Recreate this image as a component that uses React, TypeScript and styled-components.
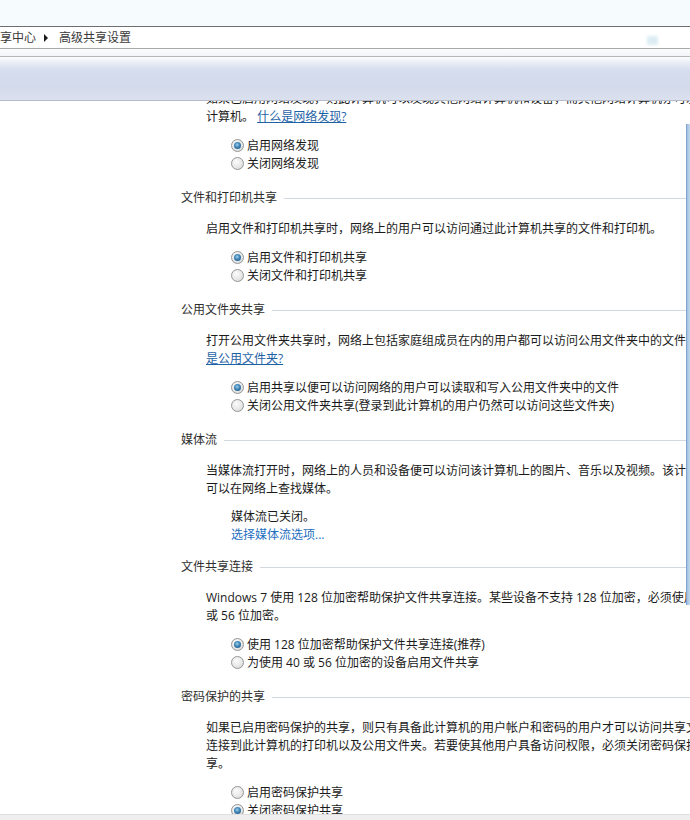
import React from 'react';
import styled, { createGlobalStyle } from 'styled-components';

const GlobalStyle = createGlobalStyle`
  html, body {
    margin: 0;
    padding: 0;
    background: #ffffff;
    overflow: hidden;
  }
  body {
    font-family: "Open Sans", "Noto Sans CJK SC", sans-serif;
    font-size: 12px;
    color: #1a1a1a;
  }
`;

const Window = styled.div`
  position: relative;
  width: 690px;
  height: 820px;
  display: flex;
  flex-direction: column;
  overflow: hidden;
  background: #fff;
`;

const TopStrip = styled.div`
  height: 26px;
  flex-shrink: 0;
  background: #f6fbfd;
`;

const Breadcrumb = styled.div`
  height: 21px;
  flex-shrink: 0;
  display: flex;
  align-items: center;
  border-top: 1px solid #6e6e6e;
  border-bottom: 1px solid #a9a9a9;
  background: #fff;
  line-height: 21px;
  white-space: nowrap;
`;

const Crumb = styled.span`
  color: #3a3a3a;
`;

const CrumbArrow = styled.span`
  width: 0;
  height: 0;
  margin: 0 11px 0 8px;
  border-left: 4px solid #1a1a1a;
  border-top: 4px solid transparent;
  border-bottom: 4px solid transparent;
`;

const SearchGlow = styled.span`
  margin-left: auto;
  margin-right: 32px;
  width: 11px;
  height: 9px;
  margin-top: 6px;
  border-radius: 2px;
  background: #dcecf4;
  filter: blur(1.5px);
`;

const Gap = styled.div`
  height: 7px;
  flex-shrink: 0;
  background: linear-gradient(#fbfcfd, #f1f4f8);
  border-bottom: 1px solid #b3b5b8;
`;

const CommandBand = styled.div`
  height: 43px;
  flex-shrink: 0;
  background: linear-gradient(#fbfcfe 0, #e6eaf4 7px, #d6ddee 13px, #d3daeb 70%, #dbe0ee 100%);
  border-bottom: 1px solid #b7bccb;
`;

const Scroller = styled.div`
  flex: 1;
  overflow: hidden;
`;

const Page = styled.div`
  margin-top: -11px;
  padding-left: 181px;
  width: 560px;
`;

const Section = styled.div<{ $gap?: number }>`
  margin-top: ${({ $gap }) => $gap ?? 17}px;
`;

const Heading = styled.div`
  display: flex;
  align-items: center;
  line-height: 18px;
  color: #2e2e2e;
  white-space: nowrap;
  &::after {
    content: '';
    flex: 1;
    height: 1px;
    margin-left: 7px;
    background: #d2d8df;
  }
`;

const Desc = styled.div<{ $first?: boolean }>`
  margin: ${({ $first }) => ($first ? '0' : '13px')} 0 0 25px;
  line-height: 18px;
  white-space: nowrap;
`;

const Line = styled.div``;

const Link = styled.a<{ $plain?: boolean }>`
  color: ${({ $plain }) => ($plain ? '#1f6fbf' : '#1e62a6')};
  text-decoration: ${({ $plain }) => ($plain ? 'none' : 'underline')};
  cursor: pointer;
`;

const RadioGroup = styled.div`
  margin: 10px 0 0 50px;
  display: flex;
  flex-direction: column;
`;

const RadioRow = styled.label`
  display: flex;
  align-items: center;
  gap: 3px;
  height: 18px;
  white-space: nowrap;
`;

const RadioMark = styled.span<{ $checked: boolean }>`
  position: relative;
  width: 13px;
  height: 13px;
  box-sizing: border-box;
  border-radius: 50%;
  flex-shrink: 0;
  border: 1px solid #959696;
  background: radial-gradient(circle at 40% 35%, #fbfbfb 0%, #e8e8e8 55%, #cfd0d0 100%);
  &::after {
    content: '';
    position: absolute;
    inset: 2px;
    border-radius: 50%;
    background: ${({ $checked }) =>
      $checked
        ? 'radial-gradient(circle at 45% 40%, #9fd0ee 0%, #3d83b4 45%, #1c4d78 100%)'
        : 'transparent'};
  }
`;

const Status = styled.div`
  margin: 10px 0 0 50px;
  line-height: 18px;
`;

const BottomStrip = styled.div`
  height: 5px;
  flex-shrink: 0;
  background: #efefef;
  border-top: 1px solid #e0e0e0;
`;

const EdgeAccent = styled.div`
  position: absolute;
  right: 0;
  top: 124px;
  width: 4px;
  height: 481px;
  background: linear-gradient(to right, #6c95c4, #a9c6e4 40%, #c4d8ee);
`;

type Option = { label: string; checked?: boolean };

const Radios: React.FC<{ options: Option[] }> = ({ options }) => (
  <RadioGroup>
    {options.map((o) => (
      <RadioRow key={o.label}>
        <RadioMark $checked={!!o.checked} />
        {o.label}
      </RadioRow>
    ))}
  </RadioGroup>
);

export default function App() {
  return (
    <>
      <GlobalStyle />
      <Window>
        <TopStrip />
        <Breadcrumb>
          <Crumb>享中心</Crumb>
          <CrumbArrow />
          <Crumb>高级共享设置</Crumb>
          <SearchGlow />
        </Breadcrumb>
        <Gap />
        <CommandBand />
        <Scroller>
          <Page>
            <Desc $first>
              <Line>如果已启用网络发现，则此计算机可以发现其他网络计算机和设备，而其他网络计算机亦可发现此</Line>
              <Line>
                计算机。 <Link>什么是网络发现?</Link>
              </Line>
            </Desc>
            <Radios options={[{ label: '启用网络发现', checked: true }, { label: '关闭网络发现' }]} />

            <Section>
              <Heading>文件和打印机共享</Heading>
              <Desc>
                <Line>启用文件和打印机共享时，网络上的用户可以访问通过此计算机共享的文件和打印机。</Line>
              </Desc>
              <Radios
                options={[{ label: '启用文件和打印机共享', checked: true }, { label: '关闭文件和打印机共享' }]}
              />
            </Section>

            <Section>
              <Heading>公用文件夹共享</Heading>
              <Desc>
                <Line>
                  打开公用文件夹共享时，网络上包括家庭组成员在内的用户都可以访问公用文件夹中的文件。<Link>什么</Link>
                </Line>
                <Line>
                  <Link>是公用文件夹?</Link>
                </Line>
              </Desc>
              <Radios
                options={[
                  { label: '启用共享以便可以访问网络的用户可以读取和写入公用文件夹中的文件', checked: true },
                  { label: '关闭公用文件夹共享(登录到此计算机的用户仍然可以访问这些文件夹)' },
                ]}
              />
            </Section>

            <Section>
              <Heading>媒体流</Heading>
              <Desc>
                <Line>当媒体流打开时，网络上的人员和设备便可以访问该计算机上的图片、音乐以及视频。该计算机还</Line>
                <Line>可以在网络上查找媒体。</Line>
              </Desc>
              <Status>
                <Line>媒体流已关闭。</Line>
                <Line>
                  <Link $plain>选择媒体流选项...</Link>
                </Line>
              </Status>
            </Section>

            <Section $gap={14}>
              <Heading>文件共享连接</Heading>
              <Desc>
                <Line>Windows 7 使用 128 位加密帮助保护文件共享连接。某些设备不支持 128 位加密，必须使用 40</Line>
                <Line>或 56 位加密。</Line>
              </Desc>
              <Radios
                options={[
                  { label: '使用 128 位加密帮助保护文件共享连接(推荐)', checked: true },
                  { label: '为使用 40 或 56 位加密的设备启用文件共享' },
                ]}
              />
            </Section>

            <Section>
              <Heading>密码保护的共享</Heading>
              <Desc>
                <Line>如果已启用密码保护的共享，则只有具备此计算机的用户帐户和密码的用户才可以访问共享文件、</Line>
                <Line>连接到此计算机的打印机以及公用文件夹。若要使其他用户具备访问权限，必须关闭密码保护共</Line>
                <Line>享。</Line>
              </Desc>
              <Radios options={[{ label: '启用密码保护共享' }, { label: '关闭密码保护共享', checked: true }]} />
            </Section>
          </Page>
        </Scroller>
        <BottomStrip />
        <EdgeAccent />
      </Window>
    </>
  );
}
